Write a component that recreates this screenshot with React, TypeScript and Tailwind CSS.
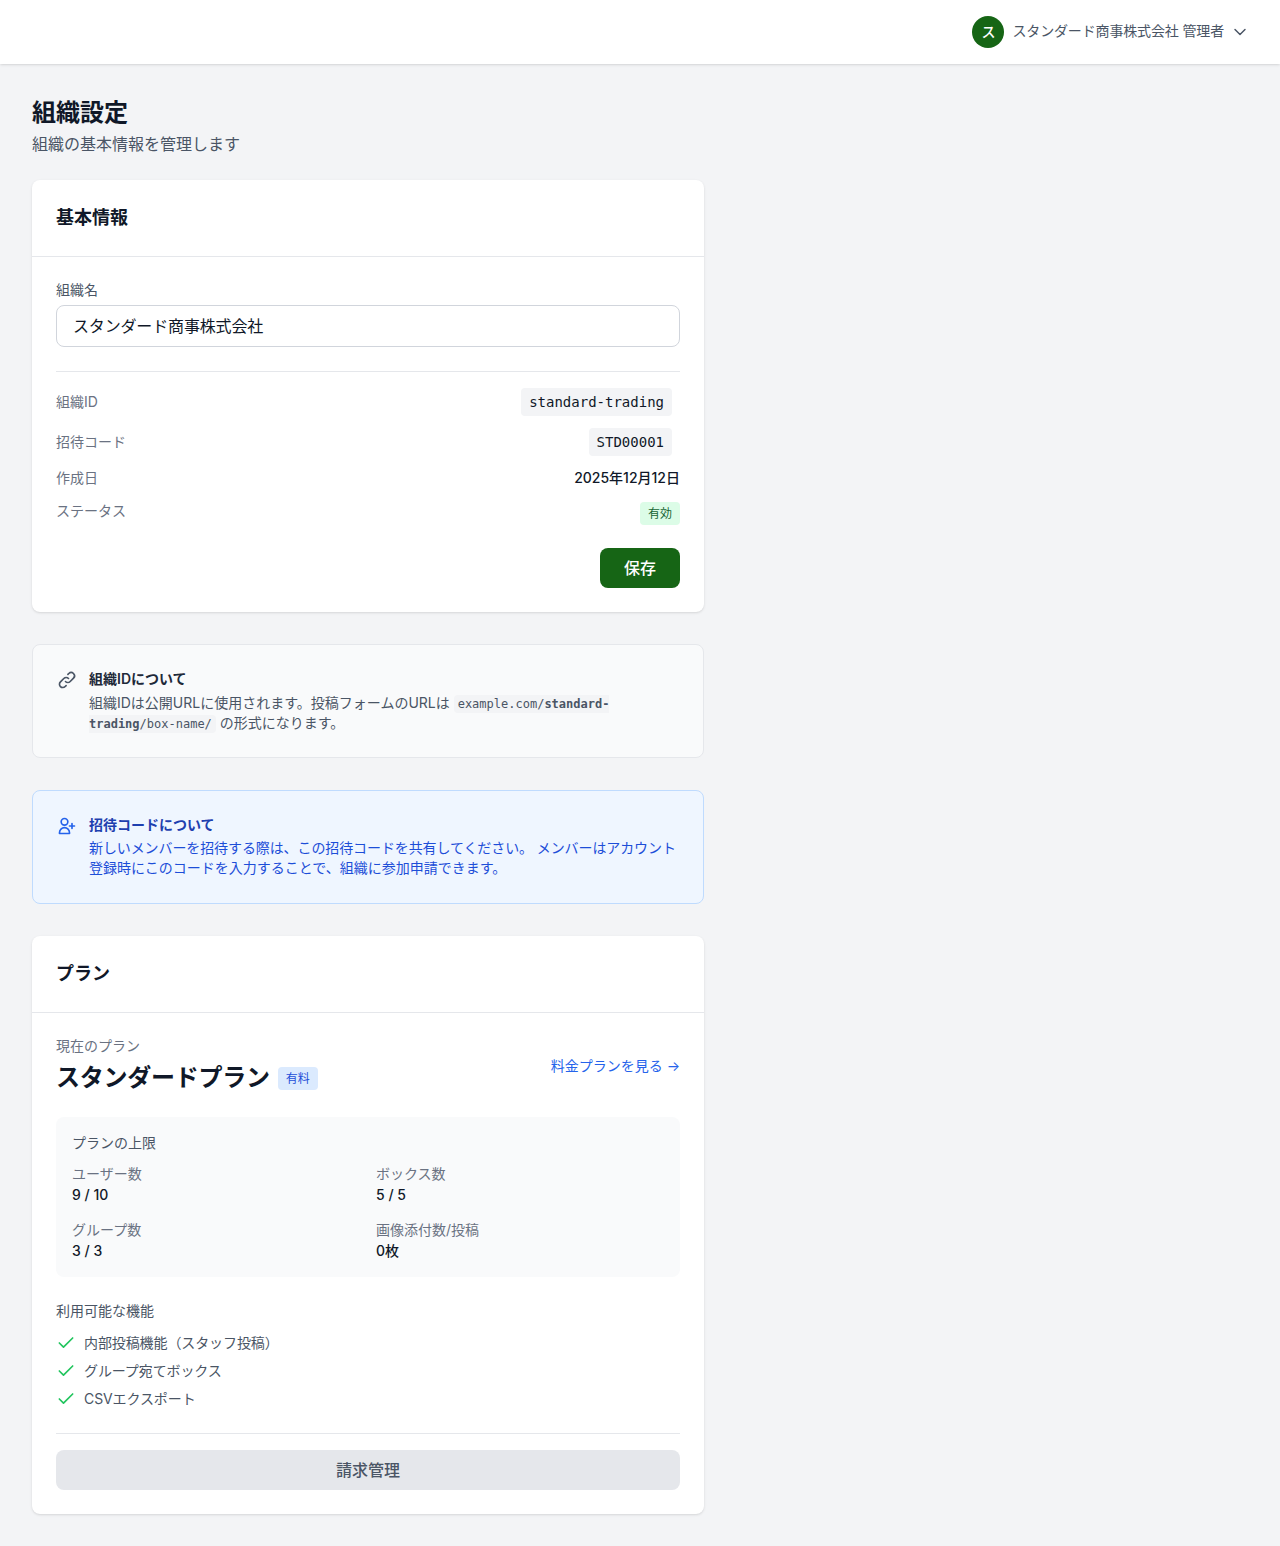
import React from 'react';
import { ChevronDown, Check } from 'lucide-react';

const sans = 'font-[Inter,"Noto_Sans_CJK_JP",sans-serif]';
const mono = 'font-["DejaVu_Sans_Mono","Noto_Sans_CJK_JP",monospace]';

const InfoRow: React.FC<{ label: string; className?: string; children: React.ReactNode }> = ({ label, className, children }) => (
    <div className={`flex justify-between ${className ?? ''}`}>
        <span className="text-sm leading-5 text-gray-500">{label}</span>
        {children}
    </div>
);

const Limit: React.FC<{ label: string; value: string }> = ({ label, value }) => (
    <div>
        <div className="text-sm leading-5 text-gray-500">{label}</div>
        <div className="mt-[1px] text-sm leading-5 font-medium text-gray-900">{value}</div>
    </div>
);

const Feature: React.FC<{ label: string }> = ({ label }) => (
    <li className="flex items-center gap-2 text-sm leading-5 text-gray-600 tracking-[-0.1px]">
        <Check className="w-5 h-5 text-[#22c55e]" />
        {label}
    </li>
);

export default function App() {
    return (
        <div className={`min-h-[1546px] bg-gray-100 ${sans}`}>
            <header className="h-16 bg-white shadow-sm flex items-center justify-end pr-[30px]">
                <div className="w-8 h-8 rounded-full bg-[#166515] text-white text-sm font-medium flex items-center justify-center">ス</div>
                <span className="ml-2 -mt-[2px] text-sm text-gray-600 tracking-[-0.15px]">スタンダード商事株式会社 管理者</span>
                <ChevronDown className="ml-1.5 w-5 h-5 text-gray-600" strokeWidth={1.75} />
            </header>

            <main className="px-8 pt-[33px] pb-8 w-[736px]">
                <h1 className="text-2xl leading-8 font-bold text-gray-900">組織設定</h1>
                <p className="mt-[3px] text-base leading-6 text-gray-600">組織の基本情報を管理します</p>

                <section className="mt-6 bg-white rounded-lg shadow-sm">
                    <div className="px-6 py-6 border-b border-gray-200">
                        <h2 className="text-lg leading-7 font-semibold text-gray-900">基本情報</h2>
                    </div>
                    <div className="p-6">
                        <label className="block text-sm leading-5 text-gray-600 mb-[5px] -mt-[1px]">組織名</label>
                        <input
                            readOnly
                            value="スタンダード商事株式会社"
                            className="w-full h-[42px] px-4 pb-[2px] border border-gray-300 rounded-lg text-base text-gray-900 bg-white tracking-[-0.16px]"
                        />
                        <div className="mt-6 pt-4 border-t border-gray-200">
                            <InfoRow label="組織ID" className="h-7 items-center">
                                <code className={`${mono} mr-2 text-sm leading-5 px-2 py-1 bg-gray-100 rounded text-gray-900`}>standard-trading</code>
                            </InfoRow>
                            <InfoRow label="招待コード" className="mt-3 h-7 items-center">
                                <code className={`${mono} mr-2 text-sm leading-5 px-2 py-1 bg-gray-100 rounded text-gray-900`}>STD00001</code>
                            </InfoRow>
                            <InfoRow label="作成日" className="mt-3">
                                <span className="text-sm leading-5 text-gray-900 font-medium">2025年12月12日</span>
                            </InfoRow>
                            <InfoRow label="ステータス" className="mt-[13px]">
                                <span className="mt-[1px] px-2 py-0.5 text-xs leading-[19px] rounded bg-[#dcfce7] text-[#166534]">有効</span>
                            </InfoRow>
                        </div>
                        <div className="mt-[23px] flex justify-end">
                            <button className="w-20 h-10 rounded-lg bg-[#166515] text-white text-base font-medium">保存</button>
                        </div>
                    </div>
                </section>

                <section className="mt-8 px-6 py-6 h-[114px] flex gap-3 rounded-lg bg-gray-50 border border-gray-200">
                    <svg className="w-5 h-5 mt-[1px] text-gray-600 shrink-0" viewBox="0 0 24 24" fill="none" stroke="currentColor" strokeWidth={2} strokeLinecap="round" strokeLinejoin="round">
                        <path d="M13.828 10.172a4 4 0 00-5.656 0l-4 4a4 4 0 105.656 5.656l1.102-1.101m-.758-4.899a4 4 0 005.656 0l4-4a4 4 0 00-5.656-5.656l-1.1 1.1" />
                    </svg>
                    <div className="text-sm leading-5">
                        <h3 className="font-semibold text-gray-800">組織IDについて</h3>
                        <p className="mt-1 text-gray-600">
                            組織IDは公開URLに使用されます。投稿フォームのURLは{' '}
                            <code className={`${mono} text-xs leading-4 px-1 py-0.5 bg-gray-100 rounded`}>
                                example.com/<strong>standard-trading</strong>/box-name/
                            </code>{' '}
                            の形式になります。
                        </p>
                    </div>
                </section>

                <section className="mt-8 px-6 py-6 h-[114px] flex gap-3 rounded-lg bg-[#eff6ff] border border-[#bfdbfe]">
                    <svg className="w-5 h-5 mt-[1px] text-[#2563eb] shrink-0" viewBox="0 0 24 24" fill="none" stroke="currentColor" strokeWidth={2} strokeLinecap="round" strokeLinejoin="round">
                        <path d="M18 9v3m0 0v3m0-3h3m-3 0h-3m-2-5a4 4 0 11-8 0 4 4 0 018 0zM3 20a6 6 0 0112 0v1H3v-1z" />
                    </svg>
                    <div className="text-sm leading-5">
                        <h3 className="font-semibold text-[#1e40af]">招待コードについて</h3>
                        <p className="mt-[3px] text-[#1d4ed8]">
                            <span className="tracking-[-0.1px] whitespace-nowrap">新しいメンバーを招待する際は、この招待コードを共有してください。 メンバーはアカウント</span>
                            <br />
                            登録時にこのコードを入力することで、組織に参加申請できます。
                        </p>
                    </div>
                </section>

                <section className="mt-8 bg-white rounded-lg shadow-sm">
                    <div className="px-6 py-6 border-b border-gray-200">
                        <h2 className="text-lg leading-7 font-semibold text-gray-900">プラン</h2>
                    </div>
                    <div className="p-6">
                        <div className="flex items-center justify-between">
                            <div>
                                <div className="-mt-[1px] text-sm leading-5 text-gray-500">現在のプラン</div>
                                <div className="mt-[6px] flex items-center gap-2">
                                    <span className="text-2xl leading-8 font-bold text-gray-900 tracking-[-0.25px]">スタンダードプラン</span>
                                    <span className="px-2 py-0.5 text-xs leading-[19px] rounded bg-[#dbeafe] text-[#1d4ed8]">有料</span>
                                </div>
                            </div>
                            <a className="text-sm leading-5 text-[#2563eb]">料金プランを見る →</a>
                        </div>

                        <div className="mt-[23px] p-4 rounded-lg bg-gray-50">
                            <div className="text-sm leading-5 text-gray-600">プランの上限</div>
                            <div className="mt-[11px] grid grid-cols-2 gap-x-4 gap-y-[15px]">
                                <Limit label="ユーザー数" value="9 / 10" />
                                <Limit label="ボックス数" value="5 / 5" />
                                <Limit label="グループ数" value="3 / 3" />
                                <Limit label="画像添付数/投稿" value="0枚" />
                            </div>
                        </div>

                        <div className="mt-6 text-sm leading-5 text-gray-600">利用可能な機能</div>
                        <ul className="mt-3 space-y-2">
                            <Feature label="内部投稿機能（スタッフ投稿）" />
                            <Feature label="グループ宛てボックス" />
                            <Feature label="CSVエクスポート" />
                        </ul>

                        <div className="mt-6 pt-4 border-t border-gray-200">
                            <button className="w-full h-10 rounded-lg bg-gray-200 text-gray-600 text-base font-medium">請求管理</button>
                        </div>
                    </div>
                </section>
            </main>
        </div>
    );
}
